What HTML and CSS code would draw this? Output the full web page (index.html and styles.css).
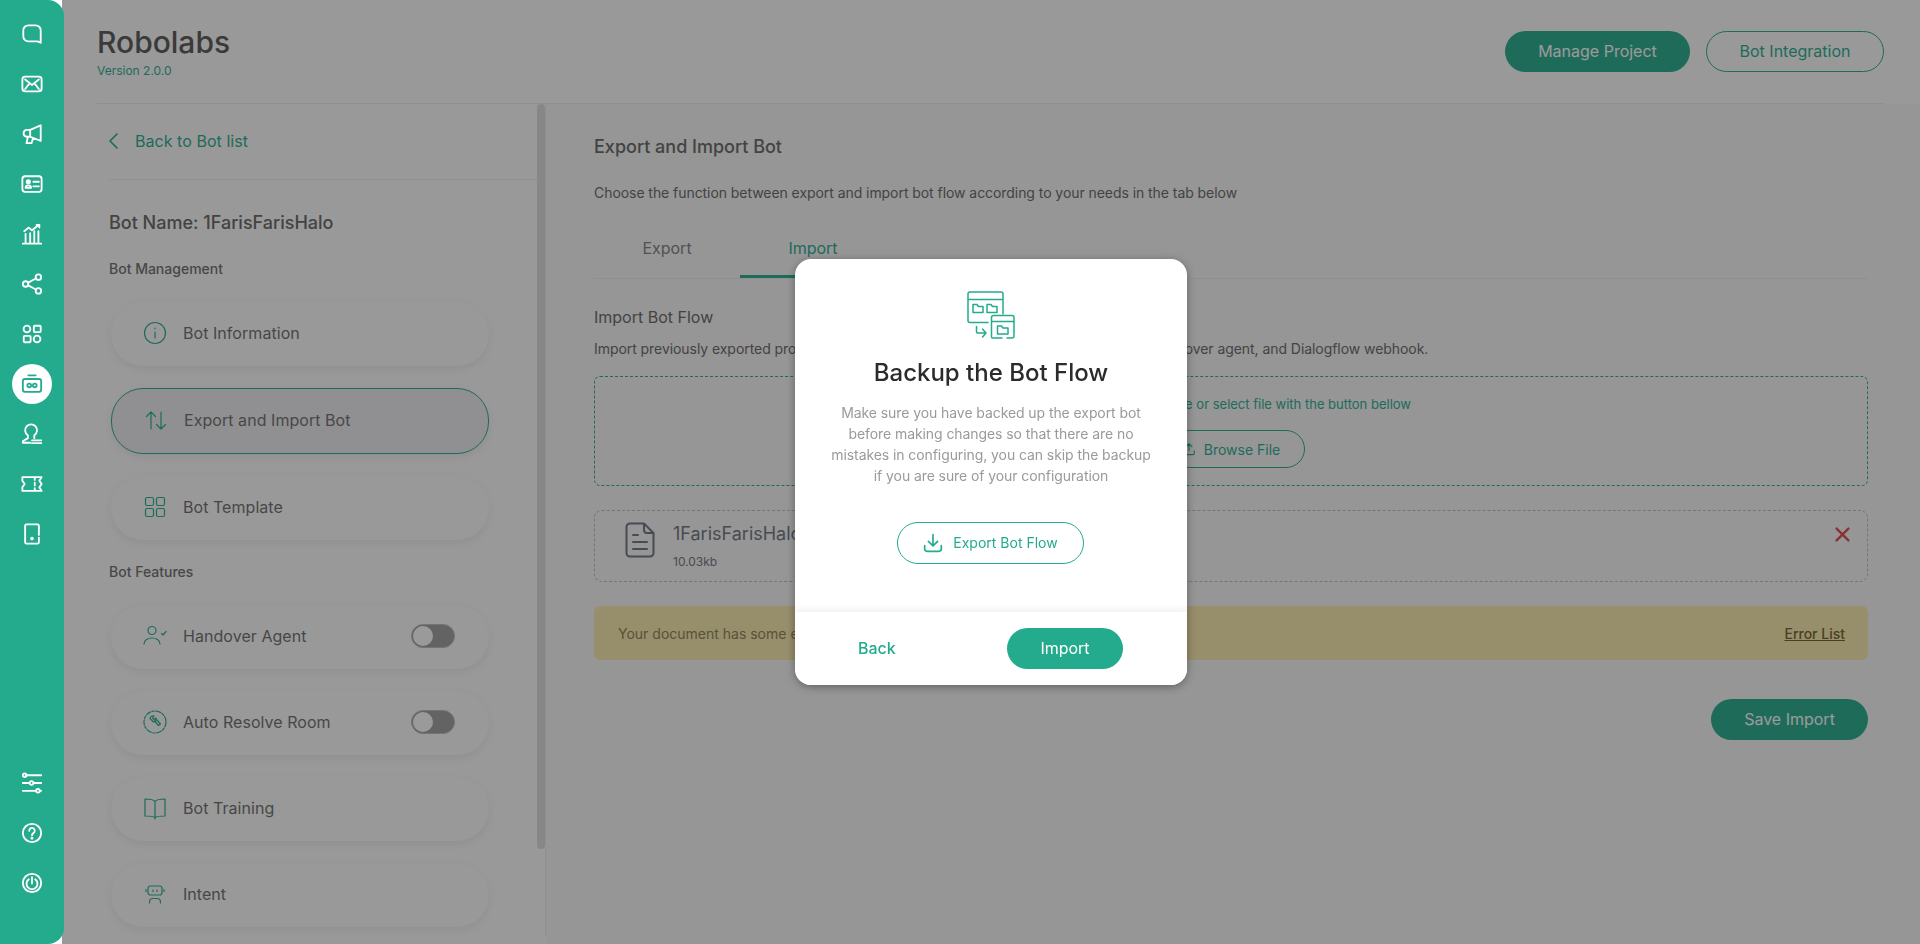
FILE: index.html
```html
<!DOCTYPE html>
<html>
    <head>
        <title>Export and Import Bot</title>
        <link rel="stylesheet" href="styles.css">
    </head>
    <body>
        <nav class="rail">
            <div class="railGroup">
                <a class="railItem"><svg viewBox="0 0 24 24"><path d="M8 2.5h8a5.5 5.500 0 0 1 5.500 5.500v13.500l-3.500-1.500H8A5.500 5.500 0 0 1 2.500 14.500V8A5.500 5.500 0 0 1 8 2.500z"/></svg></a>
                <a class="railItem"><svg viewBox="0 0 24 24"><rect x="1.5" y="4" width="21" height="16" rx="3"/><path d="M4.500 7l7.500 6 7.500-6M4.500 17.500l5-6.500M19.500 17.500l-5-6.500"/></svg></a>
                <a class="railItem"><svg viewBox="0 0 24 24"><path d="M21.500 2.500v17L10 15H6a3.800 3.800 0 0 1 0-7.500h4zM10 7.500V15M7.500 15l-1.500 7h5.500l1.500-5"/></svg></a>
                <a class="railItem"><svg viewBox="0 0 24 24"><rect x="1.5" y="3.5" width="21" height="17" rx="3"/><circle cx="8" cy="9.5" r="1.8" fill="#fff"/><path d="M5 16.200c0-3.600 6-3.600 6 0zM13.500 9.500h6M13.500 14.500h6"/></svg></a>
                <a class="railItem"><svg viewBox="0 0 24 24"><path d="M2 22.500h20M5 22V12M10 22V11M14.500 22V9M19 22V9M3.500 9l5-4 3.500 3 7.500-6M17 2h3v3"/></svg></a>
                <a class="railItem"><svg viewBox="0 0 24 24"><circle cx="5" cy="12" r="3"/><circle cx="19" cy="4.5" r="3"/><circle cx="19" cy="19.5" r="3"/><path d="M7.700 10.500l8.600-4.500M7.700 13.500l8.600 4.500"/></svg></a>
                <a class="railItem"><svg viewBox="0 0 24 24"><circle cx="6.5" cy="6.5" r="3.7"/><rect x="14" y="3" width="7.5" height="7" rx="1"/><rect x="3" y="14" width="7.5" height="7" rx="1"/><circle cx="17.5" cy="17.5" r="3.7"/></svg></a>
                <a class="railItem railActive"><svg viewBox="0 0 24 24"><path d="M8 2.500h8"/><rect x="2" y="6.5" width="20" height="14" rx="2.5"/><circle cx="9" cy="13.5" r="2"/><circle cx="15" cy="13.5" r="2"/></svg></a>
                <a class="railItem"><svg viewBox="0 0 24 24"><path d="M7.500 13.500a6.500 6.500 0 1 1 7 0v3M7.500 13.500v3L2 20v1.500h8M12 19h10M12 22h10"/></svg></a>
                <a class="railItem"><svg viewBox="0 0 24 24"><path d="M1.500 4.500h21l-2.500 4 2.500 3.500-2.500 3.500 2.500 4h-21V15.500l2.500-3.500-2.500-3.500zM15 4.500v3M15 10.500v3M15 16.500v3"/></svg></a>
                <a class="railItem"><svg viewBox="0 0 24 24"><path d="M19.500 16v5a1.500 1.500 0 0 1-1.500 1.500H6A1.500 1.500 0 0 1 4.500 21V3A1.500 1.500 0 0 1 6 1.500h12A1.500 1.500 0 0 1 19.500 3v10"/><circle cx="12" cy="17" r="1" fill="#fff"/></svg></a>
            </div>
            <div class="railGroup">
                <a class="railItem"><svg viewBox="0 0 24 24"><path d="M5 3.500h17M2 12h7M14 12h8M2 20.500h14M21 20.500h1"/><circle cx="4" cy="3.5" r="2"/><circle cx="11.5" cy="12" r="2"/><circle cx="18.5" cy="20.5" r="2"/></svg></a>
                <a class="railItem"><svg viewBox="0 0 24 24"><circle cx="12" cy="12" r="10"/><path d="M9 9.500a3 3 0 1 1 4.500 2.600c-1 .6-1.500 1.200-1.500 2.400"/><circle cx="12" cy="17.8" r=".6" fill="#fff"/></svg></a>
                <a class="railItem"><svg viewBox="0 0 24 24"><circle cx="12" cy="12" r="10"/><path d="M8.500 8a6 6 0 1 0 7 0M12 5.500v7"/></svg></a>
            </div>
        </nav>

        <div class="main">
            <header class="topBar">
                <div>
                    <h1 class="brand">Robolabs</h1>
                    <div class="version">Version 2.0.0</div>
                </div>
                <div class="topActions">
                    <button class="pill pillFill manageBtn">Manage Project</button>
                    <button class="pill pillLine integrationBtn">Bot Integration</button>
                </div>
            </header>

            <div class="content">
                <aside class="sideMenu">
                    <div class="scrollThumb"></div>
                    <a class="backLink">
                        <svg viewBox="0 0 24 24"><path d="M15 5l-7 7 7 7"/></svg>
                        Back to Bot list
                    </a>
                    <h2 class="botName">Bot Name: 1FarisFarisHalo</h2>
                    <h3 class="menuLabel">Bot Management</h3>
                    <a class="menuCard">
                        <svg class="menuIcon" viewBox="0 0 24 24"><circle cx="12" cy="12" r="10.5"/><path d="M12 11v6M12 7v.8"/></svg>
                        Bot Information
                    </a>
                    <a class="menuCard menuActive">
                        <svg class="menuIcon" viewBox="0 0 24 24"><path d="M7 21V4M2.500 8.500L7 4l4.500 4.500M17 4v17M12.500 16.500L17 21l4.500-4.500"/></svg>
                        Export and Import Bot
                    </a>
                    <a class="menuCard">
                        <svg class="menuIcon" viewBox="0 0 24 24"><rect x="2.5" y="2.5" width="8" height="8" rx="1.5"/><rect x="13.5" y="2.5" width="8" height="8" rx="1.5"/><rect x="2.5" y="13.5" width="8" height="8" rx="1.5"/><rect x="13.5" y="13.5" width="8" height="8" rx="1.5"/></svg>
                        Bot Template
                    </a>
                    <h3 class="menuLabel featuresLabel">Bot Features</h3>
                    <a class="menuCard">
                        <svg class="menuIcon" viewBox="0 0 24 24"><circle cx="9" cy="6.500" r="4"/><path d="M1 20c0-8 16-8 16 0M18.500 9.500l1.500 1.500 3-3.500"/></svg>
                        Handover Agent
                        <span class="toggle"><span class="toggleKnob"></span></span>
                    </a>
                    <a class="menuCard">
                        <svg class="menuIcon" viewBox="0 0 24 24"><circle cx="12" cy="12" r="11" stroke-dasharray="5 1.500 2.500 1.500"/><path d="M7 8.500a3 3 0 0 1 4-2.500L9.500 8l1.500 1.500 2-1.500a3 3 0 0 1-2.500 4zM11.500 11l2-1.500 4 4.500-2 1.500z"/></svg>
                        Auto Resolve Room
                        <span class="toggle"><span class="toggleKnob"></span></span>
                    </a>
                    <a class="menuCard">
                        <svg class="menuIcon" viewBox="0 0 24 24"><path d="M12 5.500C10.500 3.500 8 3 2 3v17c6 0 8.500.5 10 1.500 1.500-1 4-1.500 10-1.500V3c-6 0-8.500.5-10 2.500zM12 5.500v17.500"/></svg>
                        Bot Training
                    </a>
                    <a class="menuCard">
                        <svg class="menuIcon" viewBox="0 0 24 24"><rect x="5" y="4" width="14" height="9" rx="2.5"/><path d="M10 8v1.500M14 8v1.500M3 7.500v2M21 7.500v2M6.500 21v-1a3.500 3.500 0 0 1 3.500-3.500h4a3.500 3.500 0 0 1 3.500 3.500v1"/></svg>
                        Intent
                    </a>
                </aside>

                <section class="panel">
                    <h2 class="panelTitle">Export and Import Bot</h2>
                    <p class="panelText panelIntro">Choose the function between export and import bot flow according to your needs in the tab below</p>
                    <div class="tabs">
                        <div class="tab">Export</div>
                        <div class="tab tabActive">Import</div>
                    </div>
                    <h3 class="sectionTitle">Import Bot Flow</h3>
                    <p class="panelText sectionText">Import previously exported project to restore all of the bot flow data, intents, entities, handover agent, and Dialogflow webhook.</p>
                    <div class="dropZone">
                        <div class="dropText">Drag and drop file here or select file with the button bellow</div>
                        <button class="pill pillLine browseBtn">
                            <svg viewBox="0 0 24 24"><path d="M12 15V3M7 8l5-5 5 5M3 15v5a1.500 1.500 0 0 0 1.500 1.500h15A1.500 1.500 0 0 0 21 20v-5"/></svg>
                            Browse File
                        </button>
                    </div>
                    <div class="fileCard">
                        <svg class="fileIcon" viewBox="0 0 30 36"><path d="M19 1.500H5A3.500 3.500 0 0 0 1.500 5v26A3.500 3.500 0 0 0 5 34.500h20a3.500 3.500 0 0 0 3.500-3.500V11zM19 1.500V8a3 3 0 0 0 3 3h6.500M8 13h5M8 20h14M8 27h14"/></svg>
                        <div class="fileInfo">
                            <div class="fileName">1FarisFarisHalo.json</div>
                            <div class="fileSize">10.03kb</div>
                        </div>
                        <svg class="fileRemove" viewBox="0 0 14 14"><path d="M1.500 1.500l11 11M12.500 1.500l-11 11"/></svg>
                    </div>
                    <div class="warning">
                        <span>Your document has some errors, please check the error list</span>
                        <a class="errorLink">Error List</a>
                    </div>
                    <div class="panelFoot">
                        <button class="pill pillFill saveBtn">Save Import</button>
                    </div>
                </section>
            </div>
        </div>

        <div class="overlay">
            <div class="modal">
                <div class="modalBody">
                    <svg class="modalIcon" viewBox="0 0 48 48">
                        <path d="M21 31.500H3A2 2 0 0 1 1 29.500V3A2 2 0 0 1 3 1h31a2 2 0 0 1 2 2v20M1 8.500h35"/>
                        <path d="M6 13.500h4l1.500 2H16v6H6zM20 13.500h4l1.500 2H30v6H20z"/>
                        <path d="M24.500 46V26.500a2 2 0 0 1 2-2H45a2 2 0 0 1 2 2V45a2 2 0 0 1-2 2h-5M24.500 46a1 1 0 0 0 1 1H35M24.500 30.500H47"/>
                        <path d="M30.500 35h4l1.500 2h5v6H30.500z"/>
                        <path d="M9.500 35.500V41a1 1 0 0 0 1 1h8M15.500 38l3.500 4-3.500 4"/>
                    </svg>
                    <h2 class="modalTitle">Backup the Bot Flow</h2>
                    <p class="modalText">Make sure you have backed up the export bot before making changes so that there are no mistakes in configuring, you can skip the backup if you are sure of your configuration</p>
                    <button class="pill pillLine exportBtn">
                        <svg viewBox="0 0 24 24"><path d="M12 2v13M6.500 10l5.500 5.500 5.500-5.500M2 15v4a3 3 0 0 0 3 3h14a3 3 0 0 0 3-3v-4"/></svg>
                        Export Bot Flow
                    </button>
                </div>
                <div class="modalFoot">
                    <a class="modalBack">Back</a>
                    <button class="pill pillFill importBtn">Import</button>
                </div>
            </div>
        </div>
    </body>
</html>
```

FILE: styles.css
```css
* {
    box-sizing: border-box;
    margin: 0;
    padding: 0;
    font-family: 'Inter', 'Liberation Sans', sans-serif;
}

body {
    display: flex;
    height: 100vh;
    overflow: hidden;
    background: #fff;
    color: #646464;
}

svg {
    fill: none;
    stroke-linecap: round;
    stroke-linejoin: round;
}

/* left icon rail, sits above the dim layer */
.rail {
    position: relative;
    z-index: 3;
    flex: none;
    width: 64px;
    height: 100%;
    padding: 14px 0 41px;
    display: flex;
    flex-direction: column;
    justify-content: space-between;
    background: #24ab8e;
    border-radius: 0 16px 16px 0;
}

.railGroup {
    display: flex;
    flex-direction: column;
    align-items: center;
    gap: 10px;
}

.railItem {
    width: 40px;
    height: 40px;
    display: flex;
    align-items: center;
    justify-content: center;
    border-radius: 50%;
}

.railItem svg {
    width: 22px;
    height: 22px;
    stroke: #fff;
    stroke-width: 2;
}

.railActive {
    background: #fff;
}

.railActive svg {
    stroke: #24ab8e;
}

.main {
    flex: 1;
    min-width: 0;
    height: 100%;
    display: flex;
    flex-direction: column;
    margin-left: -2px;
    padding-left: 35px;
    background: #fdfdfd;
}

.topBar {
    flex: none;
    height: 104px;
    margin-right: 36px;
    display: flex;
    justify-content: space-between;
    align-items: flex-start;
    border-bottom: 1px solid #ececec;
}

.brand {
    margin-top: 23px;
    font-size: 30px;
    line-height: 38px;
    font-weight: 500;
    color: #555;
}

.version {
    margin-top: 2px;
    font-size: 12px;
    line-height: 16px;
    color: #24ab8e;
}

.topActions {
    display: flex;
    gap: 16px;
    margin-top: 31px;
}

.pill {
    display: flex;
    align-items: center;
    justify-content: center;
    padding-bottom: 1px;
    border-radius: 24px;
    font-size: 16px;
    cursor: pointer;
}

.pillFill {
    border: none;
    background: #24ab8e;
    color: #fff;
}

.pillLine {
    border: 1px solid #24ab8e;
    background: transparent;
    color: #24ab8e;
}

.manageBtn {
    width: 185px;
    height: 41px;
}

.integrationBtn {
    width: 178px;
    height: 41px;
}

.content {
    flex: 1;
    min-height: 0;
    display: flex;
}

.sideMenu {
    position: relative;
    flex: none;
    width: 449px;
    margin-bottom: 8px;
    padding-left: 14px;
    border-right: 1px solid #eee;
    overflow: hidden;
}

.scrollThumb {
    position: absolute;
    top: 0;
    right: 0;
    width: 8px;
    height: 745px;
    border-radius: 4px;
    background: #dedede;
}

.backLink {
    height: 76px;
    margin: 0 8px 0 -2px;
    padding-bottom: 2px;
    display: flex;
    align-items: center;
    gap: 9px;
    font-size: 16px;
    letter-spacing: .05px;
    color: #24ab8e;
    border-bottom: 1px solid #eee;
}

.backLink svg {
    width: 24px;
    height: 24px;
    margin-left: -7px;
    stroke: #24ab8e;
    stroke-width: 1.7;
}

.botName {
    margin: 31px 0 0 -2px;
    font-size: 18px;
    line-height: 24px;
    font-weight: 500;
}

.menuLabel {
    margin: 24px 0 23px -2px;
    font-size: 14px;
    line-height: 20px;
    font-weight: 500;
    color: #6c6c6c;
}

.featuresLabel {
    margin-top: 22px;
}

.menuCard {
    width: 378px;
    height: 64px;
    margin-bottom: 22px;
    padding: 0 34px 2px 32px;
    display: flex;
    align-items: center;
    border-radius: 32px;
    background: #fdfdfd;
    box-shadow: 0 3px 8px rgba(0,0,0,.07);
    font-size: 16px;
    letter-spacing: .05px;
    color: #6c6c6c;
}

.menuActive {
    height: 66px;
    border: 1px solid #24ab8e;
    background: #eeeef0;
}

.menuIcon {
    flex: none;
    width: 24px;
    height: 24px;
    margin-right: 16px;
    stroke: #24ab8e;
    stroke-width: 1.2;
}

.toggle {
    margin-left: auto;
    width: 44px;
    height: 24px;
    padding: 1px;
    border-radius: 12px;
    background: #9e9e9e;
    border: 1px solid #bbb;
}

.toggleKnob {
    display: block;
    width: 20px;
    height: 20px;
    border-radius: 50%;
    background: #fff;
}

.panel {
    flex: 1;
    min-width: 0;
    padding: 31px 52px 0 48px;
    background: #f8f8f8;
}

.panelTitle {
    font-size: 18px;
    line-height: 24px;
    font-weight: 500;
}

.panelText {
    font-size: 14px;
    line-height: 20px;
    letter-spacing: -.06px;
}

.panelIntro {
    margin-top: 24px;
}

.tabs {
    margin-top: 20px;
    height: 56px;
    display: flex;
    border-bottom: 1px solid #ececec;
}

.tab {
    width: 146px;
    height: 55px;
    padding-top: 15px;
    font-size: 16px;
    line-height: 20px;
    text-align: center;
    color: #7d7d7d;
}

.tabActive {
    color: #24ab8e;
    border-bottom: 3px solid #24ab8e;
}

.sectionTitle {
    margin-top: 26px;
    font-size: 16px;
    line-height: 24px;
    font-weight: 400;
}

.sectionText {
    margin-top: 10px;
}

.dropZone {
    margin-top: 17px;
    height: 110px;
    padding-top: 17px;
    display: flex;
    flex-direction: column;
    align-items: center;
    border: 1px dashed #24ab8e;
    border-radius: 6px;
}

.dropText {
    font-size: 13px;
    line-height: 20px;
    color: #24ab8e;
}

.browseBtn {
    margin-top: 16px;
    width: 148px;
    height: 38px;
    gap: 8px;
    padding-bottom: 0;
    font-size: 14px;
}

.browseBtn svg {
    width: 14px;
    height: 14px;
    stroke: #24ab8e;
    stroke-width: 2;
}

.fileCard {
    margin-top: 24px;
    height: 72px;
    padding: 11px 17px 0 30px;
    display: flex;
    align-items: flex-start;
    border: 1px dashed #bdbdbd;
    border-radius: 8px;
}

.fileIcon {
    flex: none;
    width: 30px;
    height: 36px;
    margin-right: 18px;
    stroke: #6d7280;
    stroke-width: 2;
}

.fileInfo {
    flex: 1;
}

.fileName {
    font-size: 18px;
    line-height: 24px;
    color: #6d7280;
}

.fileSize {
    margin-top: 9px;
    font-size: 12px;
    line-height: 14px;
    color: #6d7280;
}

.fileRemove {
    width: 15px;
    height: 15px;
    margin-top: 5px;
    stroke: #e0444f;
    stroke-width: 2.2;
}

.warning {
    margin-top: 24px;
    height: 54px;
    padding: 0 23px 0 24px;
    display: flex;
    align-items: center;
    justify-content: space-between;
    border-radius: 6px;
    background: #fae9ac;
    font-size: 14px;
    color: #8a7f55;
}

.errorLink {
    font-weight: 500;
    text-decoration: underline;
    color: #6e5f28;
}

.panelFoot {
    margin-top: 39px;
    display: flex;
    justify-content: flex-end;
}

.saveBtn {
    width: 157px;
    height: 41px;
}

/* dim layer and dialog */
.overlay {
    position: fixed;
    z-index: 2;
    top: 0;
    right: 0;
    bottom: 0;
    left: 62px;
    display: flex;
    align-items: center;
    justify-content: center;
    background: rgba(25,25,25,.44);
}

.modal {
    width: 392px;
    height: 426px;
    display: flex;
    flex-direction: column;
    border-radius: 16px;
    background: #fff;
    box-shadow: 0 2px 8px rgba(0,0,0,.35);
    overflow: hidden;
}

.modalBody {
    flex: 1;
    padding-top: 32px;
    display: flex;
    flex-direction: column;
    align-items: center;
}

.modalIcon {
    width: 48px;
    height: 48px;
    stroke: #24ab8e;
    stroke-width: 1.5;
}

.modalTitle {
    margin-top: 18px;
    font-size: 24px;
    line-height: 32px;
    font-weight: 500;
    color: #2b2b2b;
}

.modalText {
    width: 326px;
    margin-top: 13px;
    font-size: 14px;
    line-height: 21px;
    letter-spacing: -.08px;
    text-align: center;
    color: #9a9a9a;
}

.exportBtn {
    margin: 36px 1px 0 0;
    width: 187px;
    height: 42px;
    gap: 10px;
    font-size: 14px;
}

.exportBtn svg {
    width: 20px;
    height: 20px;
    stroke: #24ab8e;
    stroke-width: 2;
}

.modalFoot {
    flex: none;
    height: 73px;
    padding: 0 64px 0 63px;
    display: flex;
    align-items: center;
    justify-content: space-between;
    background: #fff;
    box-shadow: 0 -3px 6px rgba(0,0,0,.06);
}

.modalBack {
    margin-bottom: 1px;
    font-size: 16px;
    font-weight: 500;
    color: #24ab8e;
}

.importBtn {
    width: 116px;
    height: 41px;
}
```
